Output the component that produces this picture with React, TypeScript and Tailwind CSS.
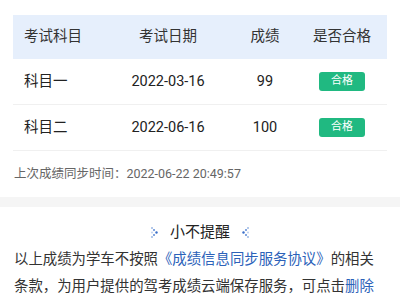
import React from "react";

const rows = [
  { subject: "科目一", date: "2022-03-16", score: "99" },
  { subject: "科目二", date: "2022-06-16", score: "100" },
];

function DotChevron({ flip }: { flip?: boolean }) {
  return (
    <svg
      width="7"
      height="11"
      viewBox="0 0 7 11"
      className={flip ? "-scale-x-100" : ""}
    >
      <circle cx="1" cy="1" r="1" fill="#9db8e4" />
      <circle cx="3" cy="3" r="1" fill="#5d8ad6" />
      <circle cx="5.5" cy="5.5" r="1.2" fill="#3b6fc9" />
      <circle cx="3" cy="8" r="1" fill="#5d8ad6" />
      <circle cx="1" cy="10" r="1" fill="#9db8e4" />
      <circle cx="1" cy="5.5" r="0.9" fill="#b8cdee" />
    </svg>
  );
}

export default function App() {
  return (
    <div
      className="w-[400px] h-[300px] overflow-hidden bg-white text-[#222]"
      style={{ fontFamily: "Roboto, 'Noto Sans CJK SC', sans-serif" }}
    >
      <div className="pt-[15px] px-[13px]">
        <div className="grid grid-cols-[97px_116px_78px_83px] h-[44px] items-center bg-[#e6effc] text-[14.5px] text-[#333]">
          <div className="pl-[11px]">考试科目</div>
          <div className="text-center">考试日期</div>
          <div className="text-center">成绩</div>
          <div className="text-center pr-[7px]">是否合格</div>
        </div>
        {rows.map((r) => (
          <div
            key={r.subject}
            className="grid grid-cols-[97px_116px_78px_83px] h-[46px] items-center border-b border-[#f0f0f0] text-[14.5px] text-[#222]"
          >
            <div className="pl-[11px]">{r.subject}</div>
            <div className="text-center">{r.date}</div>
            <div className="text-center">{r.score}</div>
            <div className="flex justify-center pr-[7px]">
              <span className="w-[46px] h-[19px] rounded-[3px] bg-[#20b981] text-white text-[11px] flex items-center justify-center">
                合格
              </span>
            </div>
          </div>
        ))}
      </div>
      <div className="h-[46px] flex items-center px-[14px] text-[12.5px] text-[#666]">
        上次成绩同步时间：2022-06-22 20:49:57
      </div>
      <div className="h-[10px] bg-[#f5f5f5]" />
      <div className="px-[14px]">
        <div className="h-[50px] flex items-center justify-center gap-[12px]">
          <DotChevron />
          <span className="text-[15px] text-[#222]">小不提醒</span>
          <DotChevron flip />
        </div>
        <p className="text-[14.4px] leading-[27px] text-[#333] -mt-[11px]">
          以上成绩为学车不按照
          <span className="text-[#2c62b9]">《成绩信息同步服务协议》</span>
          的相关条款，为用户提供的驾考成绩云端保存服务，可点击
          <span className="text-[#2c62b9]">删除</span>
          成绩记录。
        </p>
      </div>
    </div>
  );
}
